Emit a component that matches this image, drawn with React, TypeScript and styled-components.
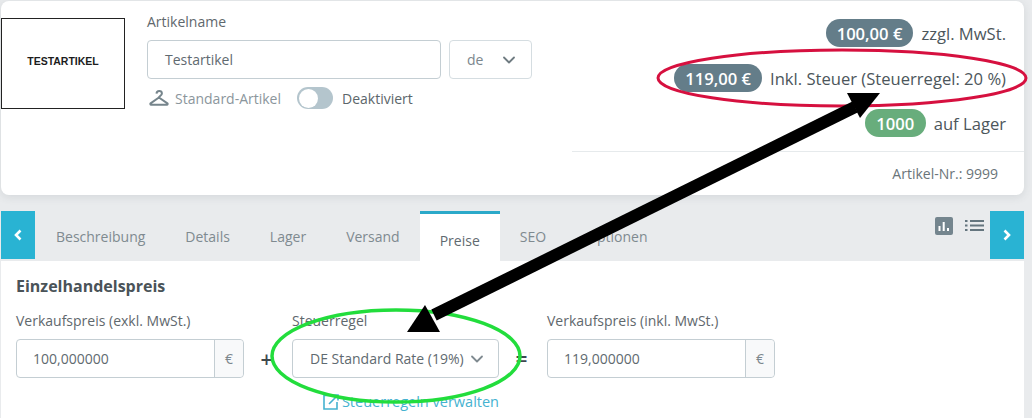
import React from "react";
import styled, { createGlobalStyle } from "styled-components";

const GlobalStyle = createGlobalStyle`
  html, body {
    margin: 0;
    padding: 0;
    background: #e9ebed;
    font-family: "Open Sans", "Liberation Sans", sans-serif;
    color: #5c666b;
  }
  * { box-sizing: border-box; }
`;

const Page = styled.div`
  position: relative;
  width: 1032px;
  height: 418px;
  overflow: hidden;
  padding: 1px 8px 0 1px;
`;

const TopCard = styled.section`
  display: flex;
  height: 194px;
  background: #fff;
  border-radius: 8px;
  box-shadow: 0 2px 8px rgba(60, 70, 80, 0.12);
`;

const Thumb = styled.div`
  display: flex;
  align-items: center;
  justify-content: center;
  width: 124px;
  height: 91px;
  margin-top: 17px;
  padding-bottom: 5px;
  border: 1px solid #222;
  font-family: "Liberation Sans", sans-serif;
  font-size: 10.5px;
  font-weight: 700;
  color: #1c1c1c;
`;

const NameColumn = styled.div`
  display: flex;
  flex-direction: column;
  width: 385px;
  margin-left: 22px;
  padding-top: 11px;
`;

const Label = styled.label`
  display: block;
  font-size: 14px;
  line-height: 20px;
  color: #5f686d;
`;

const NameRow = styled.div`
  display: flex;
  gap: 8px;
  margin-top: 8px;
`;

const TextBox = styled.div<{ $width?: number }>`
  display: flex;
  align-items: center;
  width: ${(p) => (p.$width ? `${p.$width}px` : "auto")};
  height: 39px;
  padding-left: 17px;
  background: #fff;
  border: 1px solid #c4ced3;
  border-radius: 4px;
  font-size: 14px;
  color: #5f6a70;
`;

const LangSelect = styled(TextBox)`
  justify-content: space-between;
  padding-right: 15px;
  border-color: #d5dde1;
  color: #7c878d;
`;

const MetaRow = styled.div`
  display: flex;
  align-items: center;
  height: 22px;
  margin-top: 8px;
  padding-left: 2px;
`;

const TypeText = styled.span`
  margin-left: 6px;
  font-size: 14px;
  color: #8b969c;
`;

const Toggle = styled.span`
  display: flex;
  align-items: center;
  width: 36px;
  height: 22px;
  margin-left: 16px;
  padding-left: 2px;
  background: #b4c5cd;
  border-radius: 11px;
`;

const ToggleKnob = styled.span`
  width: 19px;
  height: 19px;
  background: #fff;
  border-radius: 50%;
`;

const StatusText = styled.span`
  margin-left: 9px;
  font-size: 14px;
  color: #5c666b;
`;

const SummaryColumn = styled.div`
  display: flex;
  flex: 1;
  flex-direction: column;
  margin-left: 25px;
`;

const PriceList = styled.div`
  display: flex;
  flex: 1;
  flex-direction: column;
  align-items: flex-end;
  gap: 17px;
  padding: 18px 18px 0 0;
`;

const PriceRow = styled.div`
  display: flex;
  align-items: center;
  gap: 8px;
  height: 28px;
  font-size: 16.6px;
  color: #4c565b;
`;

const Pill = styled.span<{ $green?: boolean }>`
  display: flex;
  align-items: center;
  justify-content: center;
  min-width: 61px;
  height: 28px;
  padding: 0 11px;
  border-radius: 14px;
  background: ${(p) => (p.$green ? "#68ad7c" : "#647d89")};
  font-size: 16.6px;
  font-weight: 600;
  color: #fff;
`;

const CardFooter = styled.div`
  display: flex;
  align-items: center;
  justify-content: flex-end;
  height: 44px;
  margin-left: 15px;
  padding: 0 26px 0 0;
  border-top: 1px solid #e6eaec;
  font-size: 14px;
  color: #6a7479;
`;

const TabBar = styled.nav`
  display: flex;
  height: 50px;
  margin-top: 16px;
`;

const ScrollButton = styled.button`
  display: flex;
  align-items: center;
  justify-content: center;
  width: 34px;
  height: 48px;
  padding: 0;
  border: 0;
  background: #29b3d3;
`;

const TabList = styled.div`
  display: flex;
  margin-left: 1px;
`;

const Tab = styled.div<{ $active?: boolean }>`
  display: flex;
  align-items: center;
  height: 50px;
  padding: ${(p) => (p.$active ? "6px 20px 0" : "2px 20px 2px")};
  background: ${(p) => (p.$active ? "#fff" : "transparent")};
  border-top: ${(p) => (p.$active ? "3px solid #2ba9c9" : "0")};
  font-size: 14px;
  color: ${(p) => (p.$active ? "#5f6a70" : "#7f8a90")};
`;

const ViewIcons = styled.div`
  display: flex;
  align-items: flex-start;
  gap: 12px;
  margin-left: auto;
  margin-right: 6px;
  padding-top: 6px;
`;

const Panel = styled.section`
  height: 160px;
  padding: 14px 15px 0;
  background: #fff;
`;

const Heading = styled.h3`
  margin: 0 0 14px;
  font-size: 16px;
  line-height: 22px;
  font-weight: 700;
  color: #4a5358;
`;

const FormRow = styled.div`
  display: flex;
  align-items: flex-start;
`;

const Field = styled.div<{ $width: number }>`
  display: flex;
  flex-direction: column;
  gap: 8px;
  width: ${(p) => p.$width}px;
  font-size: 13.5px;
`;

const InputGroup = styled(TextBox)`
  justify-content: space-between;
  padding-left: 16px;
`;

const Addon = styled.span`
  display: flex;
  align-items: center;
  justify-content: center;
  width: 29px;
  height: 37px;
  background: #f8f9fa;
  border-left: 1px solid #c4ced3;
  border-radius: 0 4px 4px 0;
  color: #7c878d;
`;

const Operator = styled.span`
  display: flex;
  align-items: center;
  justify-content: center;
  width: 48px;
  height: 39px;
  margin-top: 28px;
  padding-right: 3px;
  font-size: 21px;
  font-weight: 600;
  color: #3f484d;
`;

const RuleSelect = styled(TextBox)`
  justify-content: space-between;
  padding-right: 14px;
`;

const ManageLink = styled.a`
  display: flex;
  align-items: center;
  justify-content: flex-end;
  gap: 3px;
  margin-top: 6px;
  font-size: 14.5px;
  color: #45b2d0;
`;

const Annotations = styled.svg`
  position: absolute;
  top: 0;
  left: 0;
  pointer-events: none;
`;

const Chevron = ({ color, size = 14 }: { color: string; size?: number }) => (
  <svg width={size} height={size} viewBox="0 0 14 14" fill="none">
    <path d="M2 4.5 7 9.5 12 4.5" stroke={color} strokeWidth="1.8" strokeLinecap="round" strokeLinejoin="round" />
  </svg>
);

const Hanger = () => (
  <svg width="20" height="16" viewBox="0 0 20 16" fill="none" stroke="#76858c" strokeWidth="2">
    <path d="M7.5 3.6C7.6 2 8.8 1 10.2 1s2.7 1 2.7 2.4c0 2.2-3 2.4-3 4.6" />
    <path d="M9.9 7.5 1.6 13.4c-.5.4-.3 1.4.5 1.4h15.8c.8 0 1-1 .5-1.4L9.9 7.5Z" strokeLinejoin="round" />
  </svg>
);

const ChartIcon = () => (
  <svg width="18" height="18" viewBox="0 0 18 18">
    <rect width="18" height="18" rx="2" fill="#74858e" />
    <path d="M4.5 9v5M8.7 5v9M13 11v3" stroke="#fff" strokeWidth="2" />
  </svg>
);

const ListIcon = () => (
  <svg width="19" height="18" viewBox="0 0 19 18" fill="none" stroke="#64757e" strokeWidth="1.8">
    <path d="M0 4h2.5M5 4h14M0 8.5h2.5M5 8.5h14M0 13h2.5M5 13h14" />
  </svg>
);

const ExternalIcon = () => (
  <svg width="16" height="16" viewBox="0 0 16 16" fill="none" stroke="#45b2d0" strokeWidth="1.6">
    <path d="M8 1.5H1v13.5h13V8" />
    <path d="M6 10 14.5 1.5M9.5 1h5.5v5.5" />
  </svg>
);

const tabs = ["Beschreibung", "Details", "Lager", "Versand", "Preise", "SEO", "Optionen"];

export default function App() {
  return (
    <>
      <GlobalStyle />
      <Page>
        <TopCard>
          <Thumb>TESTARTIKEL</Thumb>
          <NameColumn>
            <Label>Artikelname</Label>
            <NameRow>
              <TextBox $width={294}>Testartikel</TextBox>
              <LangSelect $width={83}>
                de
                <Chevron color="#6f7b81" />
              </LangSelect>
            </NameRow>
            <MetaRow>
              <Hanger />
              <TypeText>Standard-Artikel</TypeText>
              <Toggle>
                <ToggleKnob />
              </Toggle>
              <StatusText>Deaktiviert</StatusText>
            </MetaRow>
          </NameColumn>
          <SummaryColumn>
            <PriceList>
              <PriceRow>
                <Pill>100,00 €</Pill>
                zzgl. MwSt.
              </PriceRow>
              <PriceRow>
                <Pill>119,00 €</Pill>
                Inkl. Steuer (Steuerregel: 20 %)
              </PriceRow>
              <PriceRow>
                <Pill $green>1000</Pill>
                auf Lager
              </PriceRow>
            </PriceList>
            <CardFooter>Artikel-Nr.: 9999</CardFooter>
          </SummaryColumn>
        </TopCard>

        <TabBar>
          <ScrollButton aria-label="Zurück">
            <svg width="12" height="14" viewBox="0 0 12 14" fill="none">
              <path d="M8.5 2.5 4 7l4.5 4.5" stroke="#fff" strokeWidth="2.6" />
            </svg>
          </ScrollButton>
          <TabList>
            {tabs.map((tab) => (
              <Tab key={tab} $active={tab === "Preise"}>
                {tab}
              </Tab>
            ))}
          </TabList>
          <ViewIcons>
            <ChartIcon />
            <ListIcon />
          </ViewIcons>
          <ScrollButton aria-label="Weiter">
            <svg width="12" height="14" viewBox="0 0 12 14" fill="none">
              <path d="M3.5 2.5 8 7l-4.5 4.5" stroke="#fff" strokeWidth="2.6" />
            </svg>
          </ScrollButton>
        </TabBar>

        <Panel>
          <Heading>Einzelhandelspreis</Heading>
          <FormRow>
            <Field $width={228}>
              <Label as="span">Verkaufspreis (exkl. MwSt.)</Label>
              <InputGroup>
                100,000000
                <Addon>€</Addon>
              </InputGroup>
            </Field>
            <Operator>+</Operator>
            <Field $width={207}>
              <Label as="span">Steuerregel</Label>
              <RuleSelect>
                DE Standard Rate (19%)
                <Chevron color="#7f8a90" />
              </RuleSelect>
              <ManageLink>
                <ExternalIcon />
                Steuerregeln verwalten
              </ManageLink>
            </Field>
            <Operator>=</Operator>
            <Field $width={228}>
              <Label as="span">Verkaufspreis (inkl. MwSt.)</Label>
              <InputGroup>
                119,000000
                <Addon>€</Addon>
              </InputGroup>
            </Field>
          </FormRow>
        </Panel>

        <Annotations width="1032" height="418" viewBox="0 0 1032 418">
          <ellipse cx="842" cy="78" rx="184" ry="28" fill="none" stroke="#d6103f" strokeWidth="3" />
          <ellipse cx="396" cy="356" rx="124" ry="46" fill="none" stroke="#22dd3c" strokeWidth="3.5" />
          <path d="M855 107 434 315" stroke="#000" strokeWidth="12" />
          <path d="M847 93H880L860 118Z" fill="#000" />
          <path d="M425 305 407 332H440Z" fill="#000" />
        </Annotations>
      </Page>
    </>
  );
}
